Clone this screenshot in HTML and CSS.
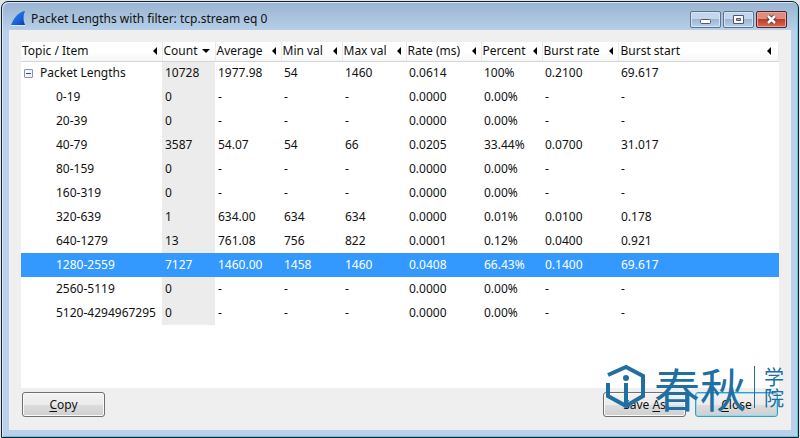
FILE: index.html
```
<!DOCTYPE html>
<html lang="en">
<head>
<meta charset="utf-8">
<title>Packet Lengths with filter: tcp.stream eq 0</title>
<link rel="stylesheet" href="styles.css">
</head>
<body>
<main class="window">
  <header class="titlebar">
    <svg class="fin" viewBox="0 0 16 16" aria-hidden="true">
      <defs><linearGradient id="fin" x1="0" y1="0" x2="1" y2="1"><stop offset="0" stop-color="#2f86ee"/><stop offset=".6" stop-color="#1b62d8"/><stop offset="1" stop-color="#0b3aa8"/></linearGradient></defs>
      <path fill="url(#fin)" d="M0 14C3 7 7 1 14 0C12 4 12 10 14 14Z"/>
      <path fill="#dce9f7" d="M0 14h14v1H0z"/>
    </svg>
    <h1>Packet Lengths with filter: tcp.stream eq 0</h1>
    <div class="caption">
      <button type="button" aria-label="Minimize"><svg viewBox="0 0 29 15"><rect x="9.500" y="7.500" width="10" height="4" rx="1" fill="#fff" stroke="#535666"/></svg></button>
      <button type="button" aria-label="Maximize"><svg viewBox="0 0 29 15"><path d="M9.500 3.500h10v8h-10zM12.500 6.500v2h4v-2z" fill="#fff" fill-rule="evenodd" stroke="#535666"/></svg></button>
      <button type="button" class="x" aria-label="Close window"><svg viewBox="0 0 29 15"><path d="M11 4l7 7M18 4l-7 7" stroke="#5b3a42" stroke-width="4.500"/><path d="M11 4l7 7M18 4l-7 7" stroke="#fff" stroke-width="2.500"/></svg></button>
    </div>
  </header>
  <section class="client">
    <div class="view">
      <table>
        <colgroup><col class="c-topic"><col class="c-count"><col class="c-avg"><col class="c-min"><col class="c-max"><col class="c-rate"><col class="c-pct"><col class="c-burst"><col></colgroup>
        <thead><tr>
          <th><div>Topic / Item<i></i></div></th><th><div>Count<i class="down"></i></div></th><th><div>Average<i></i></div></th><th><div>Min val<i></i></div></th><th><div>Max val<i></i></div></th><th><div>Rate (ms)<i></i></div></th><th><div>Percent<i></i></div></th><th><div>Burst rate<i></i></div></th><th class="last"><div>Burst start<i></i></div></th>
        </tr></thead>
        <tbody>
          <tr class="root"><td><button type="button" class="toggle" aria-label="Collapse"></button>Packet Lengths</td><td>10728</td><td>1977.98</td><td>54</td><td>1460</td><td>0.0614</td><td>100%</td><td>0.2100</td><td>69.617</td></tr>
          <tr><td>0-19</td><td>0</td><td>-</td><td>-</td><td>-</td><td>0.0000</td><td>0.00%</td><td>-</td><td>-</td></tr>
          <tr><td>20-39</td><td>0</td><td>-</td><td>-</td><td>-</td><td>0.0000</td><td>0.00%</td><td>-</td><td>-</td></tr>
          <tr><td>40-79</td><td>3587</td><td>54.07</td><td>54</td><td>66</td><td>0.0205</td><td>33.44%</td><td>0.0700</td><td>31.017</td></tr>
          <tr><td>80-159</td><td>0</td><td>-</td><td>-</td><td>-</td><td>0.0000</td><td>0.00%</td><td>-</td><td>-</td></tr>
          <tr><td>160-319</td><td>0</td><td>-</td><td>-</td><td>-</td><td>0.0000</td><td>0.00%</td><td>-</td><td>-</td></tr>
          <tr><td>320-639</td><td>1</td><td>634.00</td><td>634</td><td>634</td><td>0.0000</td><td>0.01%</td><td>0.0100</td><td>0.178</td></tr>
          <tr><td>640-1279</td><td>13</td><td>761.08</td><td>756</td><td>822</td><td>0.0001</td><td>0.12%</td><td>0.0400</td><td>0.921</td></tr>
          <tr class="selected"><td>1280-2559</td><td>7127</td><td>1460.00</td><td>1458</td><td>1460</td><td>0.0408</td><td>66.43%</td><td>0.1400</td><td>69.617</td></tr>
          <tr><td>2560-5119</td><td>0</td><td>-</td><td>-</td><td>-</td><td>0.0000</td><td>0.00%</td><td>-</td><td>-</td></tr>
          <tr><td>5120-4294967295</td><td>0</td><td>-</td><td>-</td><td>-</td><td>0.0000</td><td>0.00%</td><td>-</td><td>-</td></tr>
        </tbody>
      </table>
    </div>
    <footer class="actions">
      <button type="button" class="copy"><u>C</u>opy</button>
      <button type="button">Save <u>A</u>s</button>
      <button type="button" class="default"><u>C</u>lose</button>
    </footer>
  </section>
</main>
<div class="watermark" lang="zh-CN">
  <svg viewBox="0 0 40 46" aria-hidden="true">
    <g fill="none" stroke="#206fa2" stroke-width="4">
      <path d="M2 11L20 3L37 12V32L20 42L2 32V19M20 19V42"/>
    </g>
    <circle cx="20" cy="14" r="3" fill="#206fa2"/>
  </svg>
  <span class="big">春秋</span>
  <span class="small">学<br>院</span>
</div>
</body>
</html>
```
FILE: styles.css
```
* { box-sizing: border-box; }

body {
  margin: 0;
  min-height: 100vh;
  padding: 1px 1px 0;
  display: flex;
  position: relative;
  background: #dfe5ea;
  font: 12px/16px "Noto Sans", "Noto Sans CJK SC", sans-serif;
  color: #111;
}

button { font: inherit; color: inherit; padding: 0; margin: 0; }

.window {
  flex: 1;
  display: flex;
  flex-direction: column;
  padding: 0 7px 7px;
  border: 1px solid #15222e;
  border-radius: 7px 7px 0 0;
  background: linear-gradient(#99b4d1, #b9d1ea 30px);
  box-shadow: inset 1px 1px #d9e7f5, inset -1px -1px #62c5dc;
}

.titlebar {
  height: 28px;
  display: flex;
  align-items: center;
  gap: 4px;
  padding: 6px 4px 0 2px;
}

.fin { width: 16px; height: 16px; }

h1 {
  flex: 1;
  margin: 0;
  font-size: 12px;
  font-weight: 400;
  white-space: nowrap;
}

.caption { display: flex; gap: 2px; }

.caption button {
  width: 31px;
  height: 17px;
  border: 1px solid #5c7390;
  border-radius: 2px;
  background: linear-gradient(#c3d6eb 50%, #9db7d3 50%, #b8d0e9);
  box-shadow: inset 0 0 0 1px #d6e5f4;
}

.caption .x {
  border-color: #5b2029;
  background: linear-gradient(#dd8c80 45%, #bd3b2c 50%, #d66c52);
  box-shadow: inset 0 0 0 1px #e4a79c;
}

.caption svg { display: block; width: 29px; height: 15px; fill: none; }

.client {
  flex: 1;
  display: flex;
  flex-direction: column;
  padding: 12px 12px 13px;
  background: #efefef;
}

.view { flex: 1; background: #fff; }

table {
  width: 100%;
  table-layout: fixed;
  border-collapse: collapse;
}

.c-topic { width: 141px; }
.c-count { width: 53px; }
.c-avg { width: 66px; }
.c-min { width: 61px; }
.c-max { width: 64px; }
.c-rate { width: 75px; }
.c-pct { width: 61px; }
.c-burst { width: 76px; }

th {
  height: 19px;
  padding: 0 5px 0 1px;
  border-bottom: 1px solid #d5d5d5;
  border-right: 1px solid #e9eaec;
  background: linear-gradient(#fff 50%, #f5f6f7);
  font-weight: 400;
  text-align: left;
}

th div {
  display: flex;
  align-items: center;
  justify-content: space-between;
  white-space: nowrap;
}

th i {
  border: 4px solid transparent;
  border-left-width: 0;
  border-right-color: #000;
}

th .down {
  border: 4px solid transparent;
  border-bottom-width: 0;
  border-top-color: #000;
}

th.last { padding-right: 7px; padding-left: 2px; }

td {
  height: 24px;
  padding: 0 0 0 3px;
  white-space: nowrap;
}

td:first-child { padding-left: 35px; }
td:nth-child(2) { background: #ececec; }
.root td:first-child { padding-left: 3px; }
.selected td, .selected td:nth-child(2) { background: #3399ff; color: #fff; }

.toggle {
  width: 9px;
  height: 9px;
  margin-right: 7px;
  border: 1px solid #8a93a8;
  border-radius: 1px;
  background: linear-gradient(#34509a, #34509a) center / 5px 1px no-repeat #f4f4f6;
}

.actions {
  display: flex;
  gap: 9px;
  padding: 4px 1px 0;
}

.actions button {
  width: 83px;
  height: 25px;
  border: 1px solid #707070;
  border-radius: 3px;
  background: linear-gradient(#f3f3f3, #ebebeb 50%, #dddddd 50%, #cfcfcf);
  box-shadow: inset 0 0 0 1px #fafafa;
}

.actions .copy { margin-right: auto; }

.actions .default {
  border-color: #3c9dbd;
  box-shadow: inset 0 0 0 1px #8bdcf2;
}

u { text-underline-offset: 2px; }

.watermark {
  position: absolute;
  right: 16px;
  bottom: 28px;
  display: flex;
  align-items: center;
  gap: 8px;
  color: #206fa2;
  font-family: "Noto Sans CJK SC", sans-serif;
  pointer-events: none;
}

.watermark svg { width: 40px; height: 46px; }

.big {
  font-size: 46px;
  line-height: 46px;
  font-weight: 400;
}

.small {
  padding-left: 9px;
  border-left: 1px solid #206fa2;
  font-size: 20px;
  line-height: 21px;
}
```
